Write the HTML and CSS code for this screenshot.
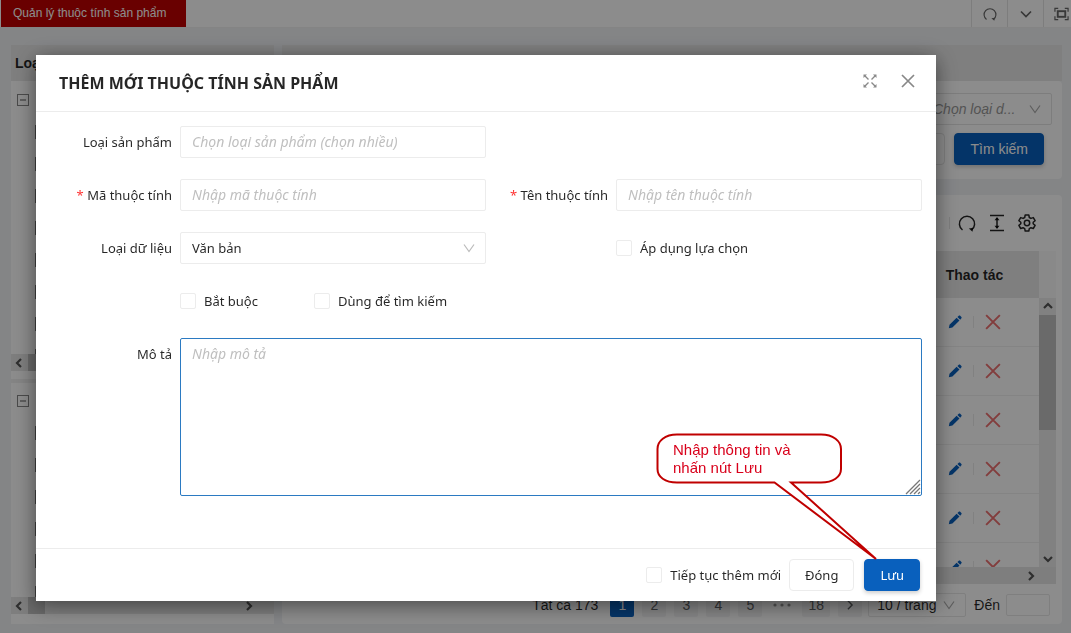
FILE: index.html
```html
<!DOCTYPE html>
<html lang="vi">
<head>
<meta charset="utf-8">
<meta name="viewport" content="width=device-width, initial-scale=1">
<title>Quản lý thuộc tính sản phẩm</title>
<link rel="stylesheet" href="styles.css">
</head>
<body>
<svg width="0" height="0" class="defs" aria-hidden="true">
  <symbol id="i-reload" viewBox="0 0 18 18"><path d="M4.500 16A7.600 7.600 0 1 1 13.500 16" fill="none" stroke="currentColor" stroke-width="1.500"/><path d="M10.800 14.400l4.400-.6-.7 3.900z" fill="currentColor"/></symbol>
  <symbol id="i-down" viewBox="0 0 12 12"><path d="M1 2.500l5 7 5-7" fill="none" stroke="currentColor" stroke-width="1.200"/></symbol>
  <symbol id="i-chev" viewBox="0 0 12 12"><path d="M1 3.500l5 5 5-5" fill="none" stroke="currentColor" stroke-width="1.700"/></symbol>
  <symbol id="i-arrow" viewBox="0 0 10 10"><path d="M1 3l4 4 4-4" fill="none" stroke="currentColor" stroke-width="2.200"/></symbol>
  <symbol id="i-full" viewBox="0 0 16 14"><path d="M1 4.500V1h3.500M11.500 1H15v3.500M15 9.500V13h-3.500M4.500 13H1V9.500" fill="none" stroke="currentColor" stroke-width="1.300"/><rect x="4" y="4" width="8" height="6" fill="none" stroke="currentColor" stroke-width="2"/></symbol>
  <symbol id="i-x" viewBox="0 0 14 14"><path d="M1 1l12 12M13 1L1 13" fill="none" stroke="currentColor" stroke-width="1.700"/></symbol>
  <symbol id="i-pencil" viewBox="0 0 14 14"><path d="M.8 13.200l.7-3.500L8.600 2.800 11.500 5.600 4.400 12.500zM9.400 2l1.400-1.300c.4-.4 1-.4 1.400 0l1.200 1.200c.4.4.4 1 0 1.400L12.200 4.700z" fill="currentColor"/></symbol>
</svg>

<div class="app">
  <header class="topbar">
    <a class="tab" href="#">Quản lý thuộc tính sản phẩm</a>
    <div class="tools">
      <button class="tool" aria-label="Tải lại"><svg width="14" height="14"><use href="#i-reload"/></svg></button>
      <button class="tool" aria-label="Mở rộng"><svg width="12" height="12"><use href="#i-chev"/></svg></button>
      <button class="tool" aria-label="Toàn màn hình"><svg width="15" height="14"><use href="#i-full"/></svg></button>
    </div>
  </header>

  <div class="workspace">
    <aside class="side">
      <h2 class="panel-title">Loại sản phẩm</h2>
      <div class="tree tree-first">
        <div class="node"><button class="toggle" aria-label="Thu gọn"></button></div>
        <div class="node child"><input type="checkbox" aria-label="Mục 1"></div>
        <div class="node child"><input type="checkbox" aria-label="Mục 2"></div>
        <div class="node child"><input type="checkbox" aria-label="Mục 3"></div>
        <div class="node child"><input type="checkbox" aria-label="Mục 4"></div>
        <div class="node child"><input type="checkbox" aria-label="Mục 5"></div>
        <div class="node child"><input type="checkbox" aria-label="Mục 6"></div>
        <div class="node child"><input type="checkbox" aria-label="Mục 7"></div>
        <div class="node child"><input type="checkbox" aria-label="Mục 8"></div>
      </div>
      <div class="hbar"><svg class="left" width="10" height="10"><use href="#i-arrow"/></svg><i class="hthumb"></i><svg class="right" width="10" height="10"><use href="#i-arrow"/></svg></div>
      <div class="splitter"></div>
      <div class="tree tree-second">
        <div class="node"><button class="toggle" aria-label="Thu gọn"></button></div>
        <div class="node child"><input type="checkbox" aria-label="Nhóm 1"></div>
        <div class="node child"><input type="checkbox" aria-label="Nhóm 2"></div>
        <div class="node child"><input type="checkbox" aria-label="Nhóm 3"></div>
        <div class="node child"><input type="checkbox" aria-label="Nhóm 4"></div>
        <div class="node child"><input type="checkbox" aria-label="Nhóm 5"></div>
        <div class="node child"><input type="checkbox" aria-label="Nhóm 6"></div>
      </div>
      <div class="hbar"><svg class="left" width="10" height="10"><use href="#i-arrow"/></svg><i class="hthumb small"></i><svg class="right" width="10" height="10"><use href="#i-arrow"/></svg></div>
      <div class="side-end"></div>
    </aside>

    <main class="main">
      <div class="main-title"></div>
      <section class="card search">
        <button class="filter"><span>Chọn loại d...</span><svg width="12" height="12"><use href="#i-down"/></svg></button>
        <div class="search-row">
          <input class="search-input" type="text" aria-label="Từ khóa">
          <button class="btn primary wide">Tìm kiếm</button>
        </div>
      </section>
      <section class="card list">
        <div class="list-tools">
          <i class="sep"></i>
          <button class="icon" aria-label="Làm mới"><svg width="18" height="18"><use href="#i-reload"/></svg></button>
          <button class="icon" aria-label="Mật độ"><svg width="16" height="18" viewBox="0 0 16 18"><path d="M1 1.500h14M1 16.500h14M8 4v10" fill="none" stroke="currentColor" stroke-width="1.500"/><path d="M8 3l2.500 3.200H5.500zM8 15l2.500-3.200H5.500z" fill="currentColor"/></svg></button>
          <button class="icon" aria-label="Cài đặt"><svg width="18" height="18" viewBox="0 0 18 18"><path d="M7.200 1h3.600l.5 2.500 1.600.9 2.400-.8 1.800 3.100L15.200 8.300v1.500l1.900 1.600-1.800 3.100-2.400-.8-1.600.9-.5 2.500H7.200l-.5-2.500-1.600-.9-2.400.8L.9 11.400l1.900-1.600V8.300L.9 6.700l1.800-3.100 2.400.8 1.600-.9z" fill="none" stroke="currentColor" stroke-width="1.500" stroke-linejoin="round"/><circle cx="9" cy="9" r="2.700" fill="none" stroke="currentColor" stroke-width="1.500"/></svg></button>
        </div>
        <div class="grid-area">
          <div class="table-wrap">
            <table>
              <thead><tr><th class="rest"></th><th class="act">Thao tác</th></tr></thead>
              <tbody>
                <tr><td></td><td><div class="actions"><button aria-label="Sửa" class="edit"><svg width="14" height="14"><use href="#i-pencil"/></svg></button><i></i><button aria-label="Xóa" class="del"><svg width="16" height="16"><use href="#i-x"/></svg></button></div></td></tr>
                <tr><td></td><td><div class="actions"><button aria-label="Sửa" class="edit"><svg width="14" height="14"><use href="#i-pencil"/></svg></button><i></i><button aria-label="Xóa" class="del"><svg width="16" height="16"><use href="#i-x"/></svg></button></div></td></tr>
                <tr><td></td><td><div class="actions"><button aria-label="Sửa" class="edit"><svg width="14" height="14"><use href="#i-pencil"/></svg></button><i></i><button aria-label="Xóa" class="del"><svg width="16" height="16"><use href="#i-x"/></svg></button></div></td></tr>
                <tr><td></td><td><div class="actions"><button aria-label="Sửa" class="edit"><svg width="14" height="14"><use href="#i-pencil"/></svg></button><i></i><button aria-label="Xóa" class="del"><svg width="16" height="16"><use href="#i-x"/></svg></button></div></td></tr>
                <tr><td></td><td><div class="actions"><button aria-label="Sửa" class="edit"><svg width="14" height="14"><use href="#i-pencil"/></svg></button><i></i><button aria-label="Xóa" class="del"><svg width="16" height="16"><use href="#i-x"/></svg></button></div></td></tr>
                <tr><td></td><td><div class="actions"><button aria-label="Sửa" class="edit"><svg width="14" height="14"><use href="#i-pencil"/></svg></button><i></i><button aria-label="Xóa" class="del"><svg width="16" height="16"><use href="#i-x"/></svg></button></div></td></tr>
              </tbody>
            </table>
          </div>
          <div class="vcol">
            <div class="vhead"></div>
            <div class="vbar"><svg class="up" width="10" height="10"><use href="#i-arrow"/></svg><i class="vthumb"></i><svg class="dn" width="10" height="10"><use href="#i-arrow"/></svg></div>
          </div>
        </div>
        <div class="hbar list-h"><svg class="right" width="10" height="10"><use href="#i-arrow"/></svg></div>
        <nav class="pager" aria-label="Phân trang">
          <span class="total">Tất cả 173</span>
          <a class="pg on" href="#">1</a><a class="pg" href="#">2</a><a class="pg" href="#">3</a><a class="pg" href="#">4</a><a class="pg" href="#">5</a>
          <span class="dots"><svg width="18" height="4" viewBox="0 0 18 4"><circle cx="2" cy="2" r="1.600"/><circle cx="9" cy="2" r="1.600"/><circle cx="16" cy="2" r="1.600"/></svg></span>
          <a class="pg last" href="#">18</a>
          <a class="pg" href="#" aria-label="Trang sau"><svg class="nx" width="10" height="10"><use href="#i-chev"/></svg></a>
          <button class="size"><span>10 / trang</span><svg width="12" height="12"><use href="#i-down"/></svg></button>
          <label class="goto">Đến <input type="text"></label>
        </nav>
      </section>
    </main>
  </div>
</div>

<div class="overlay">
  <div class="modal" role="dialog" aria-modal="true" aria-labelledby="dlg">
    <header class="modal-head">
      <h1 id="dlg">THÊM MỚI THUỘC TÍNH SẢN PHẨM</h1>
      <button class="head-btn" aria-label="Phóng to"><svg width="14" height="14" viewBox="0 0 14 14"><path d="M2 2l3.500 3.500M12 2L8.500 5.500M2 12l3.500-3.500M12 12L8.500 8.500" stroke="currentColor" stroke-width="1.400" fill="none"/><path d="M.5.500h3.500l-3.500 3.500zM13.500.500h-3.500l3.500 3.500zM.5 13.500h3.500l-3.500-3.500zM13.500 13.500h-3.500l3.500-3.500z" fill="currentColor"/></svg></button>
      <button class="head-btn" aria-label="Đóng hộp thoại"><svg width="14" height="14"><use href="#i-x"/></svg></button>
    </header>
    <form class="modal-body">
      <div class="field"><label for="type">Loại sản phẩm</label><input id="type" type="text" placeholder="Chọn loại sản phẩm (chọn nhiều)"></div>
      <div></div>
      <div class="field"><label for="code"><b>*</b> Mã thuộc tính</label><input id="code" type="text" placeholder="Nhập mã thuộc tính"></div>
      <div class="field"><label for="name"><b>*</b> Tên thuộc tính</label><input id="name" type="text" placeholder="Nhập tên thuộc tính"></div>
      <div class="field"><label for="data">Loại dữ liệu</label>
        <div class="select"><select id="data"><option>Văn bản</option></select><svg width="12" height="12"><use href="#i-down"/></svg></div></div>
      <div class="field"><span></span><label class="check"><input type="checkbox">Áp dụng lựa chọn</label></div>
      <div class="field"><span></span><div class="checks"><label class="check"><input type="checkbox">Bắt buộc</label><label class="check"><input type="checkbox">Dùng để tìm kiếm</label></div></div>
      <div></div>
      <div class="field full"><label for="desc">Mô tả</label>
        <div class="area"><textarea id="desc" placeholder="Nhập mô tả"></textarea><svg width="16" height="16" viewBox="0 0 16 16"><path d="M1 15L15 1M5 15L15 5M9 15l6-6M13 15l2-2" stroke="#777" stroke-width="1.300"/></svg></div></div>
    </form>
    <footer class="modal-foot">
      <label class="check"><input type="checkbox">Tiếp tục thêm mới</label>
      <button class="btn">Đóng</button>
      <button class="btn primary">Lưu</button>
    </footer>
    <div class="callout">
      <svg width="224" height="130" viewBox="0 0 224 130" aria-hidden="true"><path d="M22 2.500H166C178 2.500 186 9 186 17V37C186 45 178 50.500 166 50.500H136L221 127 119.500 50.500H22C10 50.500 2.500 45 2.500 37V17C2.500 9 10 2.500 22 2.500z" fill="#fff" stroke="#c00000" stroke-width="2"/></svg>
      <p>Nhập thông tin và<br>nhấn nút Lưu</p>
    </div>
  </div>
</div>
</body>
</html>
```
FILE: styles.css
```css
* { box-sizing: border-box; }
body {
  margin: 0;
  font: 14px/22px "Liberation Sans", Arial, sans-serif;
  color: rgba(0, 0, 0, 0.85);
  background: #f0f2f5;
}
button, input, select, textarea { font: inherit; color: inherit; margin: 0; }
button { padding: 0; border: 0; background: none; display: flex; align-items: center; justify-content: center; }
a { color: inherit; text-decoration: none; }
h1, h2, p { margin: 0; }
svg { display: block; flex: none; }
.defs { position: absolute; }
input[type="checkbox"] { appearance: none; flex: none; width: 16px; height: 16px; border: 1px solid #ececec; border-radius: 2px; background: #fff; }

.app { height: 100vh; display: flex; flex-direction: column; overflow: hidden; }
.topbar { display: flex; justify-content: space-between; height: 28px; flex: none; padding-left: 1px; background: #fff; border-bottom: 1px solid #f0f0f0; overflow: hidden; }
.tab { background: #c00000; color: #fff; font-size: 12px; line-height: 26px; padding: 0 20px 0 12px; }
.tools { display: flex; margin-right: -8px; }
.tool { width: 36px; border-left: 1px solid #e4e4e4; color: #666; }

.workspace { flex: 1; min-height: 0; display: flex; gap: 8px; padding: 17px 9px 9px 11px; }
.side { width: 263px; flex: none; display: flex; flex-direction: column; }
.panel-title { height: 36px; padding-left: 4px; font-size: 14px; line-height: 36px; background: #e8e8e8; }
.tree { background: #fff; overflow: hidden; padding-top: 3px; }
.tree-first { height: 273px; }
.tree-second { flex: 1; min-height: 0; padding-top: 2px; }
.node { height: 32px; display: flex; align-items: center; padding-left: 6px; }
.node.child { padding-left: 24px; }
.node input[type="checkbox"] { width: 14px; height: 14px; border-color: #777; border-radius: 0; }
.toggle { width: 12px; height: 12px; border: 1px solid #888; }
.toggle::before { content: ""; width: 6px; height: 2px; background: #aaa; }
.hbar { height: 17px; flex: none; display: flex; align-items: center; background: #e6e6e6; color: #555; }
.hbar .left { transform: rotate(90deg); margin: 0 4px 0 3px; }
.hbar .right { transform: rotate(-90deg); margin: 0 20px 0 auto; }
.hthumb { width: 110px; height: 17px; background: #c1c1c1; }
.hthumb.small { width: 17px; }
.splitter { height: 12px; flex: none; border: solid #fff; border-width: 8px 0 0; background: #f0f0f0; }
.side-end { height: 10px; flex: none; background: #fff; }

.main { flex: 1; min-width: 0; display: flex; flex-direction: column; }
.main-title { height: 36px; flex: none; background: #e8e8e8; }
.card { background: #fff; border-radius: 4px; }
.search { display: flex; flex-direction: column; align-items: flex-end; gap: 8px; padding: 12px 10px 14px; margin-bottom: 16px; }
.filter { width: 136px; height: 32px; padding: 0 10px 0 16px; justify-content: space-between; border: 1px solid #e4e4e4; border-radius: 2px; font-style: italic; color: #999; }
.search-row { display: flex; gap: 9px; padding-right: 8px; }
.search-input { width: 200px; height: 32px; border: 1px solid #e4e4e4; border-radius: 4px; background: none; }
.btn { height: 32px; padding: 0 15px; border: 1px solid #ececec; border-radius: 4px; background: #fff; }
.btn.primary { background: #0960bd; border-color: #0960bd; color: #fff; box-shadow: 0 2px 4px rgba(0, 0, 0, 0.2); }
.btn.wide { padding: 0 15px; }
.list { flex: 1; min-height: 0; display: flex; flex-direction: column; padding: 0 6px; }
.list-tools { height: 56px; flex: none; display: flex; align-items: center; justify-content: flex-end; gap: 13px; padding-right: 20px; }
.sep { width: 1px; height: 12px; margin-right: -5px; background: #e4e4e4; }
.grid-area { flex: 1; min-height: 0; display: flex; }
.table-wrap { flex: 1; overflow: hidden; }
table { width: 100%; table-layout: fixed; border-collapse: separate; border-spacing: 0; }
th { height: 47px; padding: 0; background: #e8e8e8; line-height: 20px; }
th.act { width: 129px; }
td { height: 49px; padding: 0; border-bottom: 1px solid #f0f0f0; }
.actions { display: flex; align-items: center; justify-content: center; gap: 11px; }
.actions i { width: 1px; height: 12px; background: #ececec; }
.edit { color: #0960bd; }
.del { color: #ed6f6f; }
.vcol { width: 17px; display: flex; flex-direction: column; }
.vhead { height: 47px; flex: none; background: #fafafa; }
.vbar { flex: 1; display: flex; flex-direction: column; align-items: center; background: #ececec; color: #555; }
.vthumb { width: 17px; height: 115px; background: #c1c1c1; }
.up { transform: rotate(180deg); margin: 3px 0 4px; }
.dn { margin: auto 0 3px; }
.list-h { margin-bottom: 2px; }
.pager { height: 38px; flex: none; display: flex; align-items: center; justify-content: flex-end; gap: 8px; padding-right: 6px; }
.total { margin-right: 4px; }
.pg { width: 24px; height: 24px; display: flex; align-items: center; justify-content: center; background: #f4f4f5; border-radius: 2px; color: #606266; }
.pg.on { background: #0960bd; color: #fff; }
.pg.last { width: 28px; }
.nx { transform: rotate(-90deg); }
.dots { width: 24px; display: flex; justify-content: center; fill: #999; }
.size { height: 24px; width: 98px; padding: 0 10px 0 8px; margin-left: -2px; justify-content: space-between; border: 1px solid #e8e8e8; border-radius: 2px; }
.size svg, .filter svg { color: #aaa; }
.goto { display: flex; align-items: center; gap: 6px; }
.goto input { width: 44px; height: 22px; border: 1px solid #e8e8e8; border-radius: 2px; background: none; }

.overlay { position: fixed; inset: 0; display: flex; padding: 55px 135px 32px 36px; background: rgba(0, 0, 0, 0.45); }
.modal { position: relative; flex: 1; min-width: 0; display: flex; flex-direction: column; background: #fff; font-family: "Noto Sans", sans-serif; font-size: 13px; box-shadow: 0 4px 20px rgba(0, 0, 0, 0.5); }
.modal-head { display: flex; align-items: center; height: 57px; flex: none; padding: 0 21px 4px 23px; gap: 24px; border-bottom: 1px solid #ececec; }
.modal-head h1 { flex: 1; padding-top: 4px; font-size: 16px; }
.head-btn { color: #888; }
.modal-body { flex: 1; display: grid; grid-template-columns: 1fr 1fr; align-content: start; gap: 21px 0; padding: 14px 14px 0; }
.field { display: grid; grid-template-columns: 122px 1fr; gap: 8px; align-items: center; min-height: 32px; }
.field.full { grid-column: 1 / -1; align-items: start; }
.field > label:first-child { text-align: right; line-height: 32px; white-space: nowrap; }
.field b { color: #f33; font-weight: 400; }
.field input[type="text"], select, textarea { display: block; width: 100%; height: 32px; padding: 0 11px; border: 1px solid #ececec; border-radius: 2px; background: #fff; outline: none; }
::placeholder { color: #bfbfbf; font-size: 14px; font-style: italic; opacity: 1; }
.select, .area { position: relative; }
select { appearance: none; }
.select svg { position: absolute; right: 11px; top: 10px; color: #bbb; }
textarea { height: 158px; padding: 4px 11px; border-color: #2b7ac2; resize: none; }
.area svg { position: absolute; right: 1px; bottom: 1px; }
.check { display: flex; align-items: center; gap: 8px; }
.checks { display: grid; grid-template-columns: 126px 1fr; gap: 8px; }
.modal-foot { display: flex; align-items: center; justify-content: flex-end; flex: none; padding: 10px 16px; border-top: 1px solid #ececec; }
.modal-foot .btn { margin-left: 8px; }
.modal-foot .primary { margin-left: 10px; }
.callout { position: absolute; right: 57px; bottom: 39px; }
.callout p { position: absolute; left: 18px; top: 9px; font: 15px/18px "Liberation Sans", Arial, sans-serif; color: #d9001b; white-space: nowrap; }
```
